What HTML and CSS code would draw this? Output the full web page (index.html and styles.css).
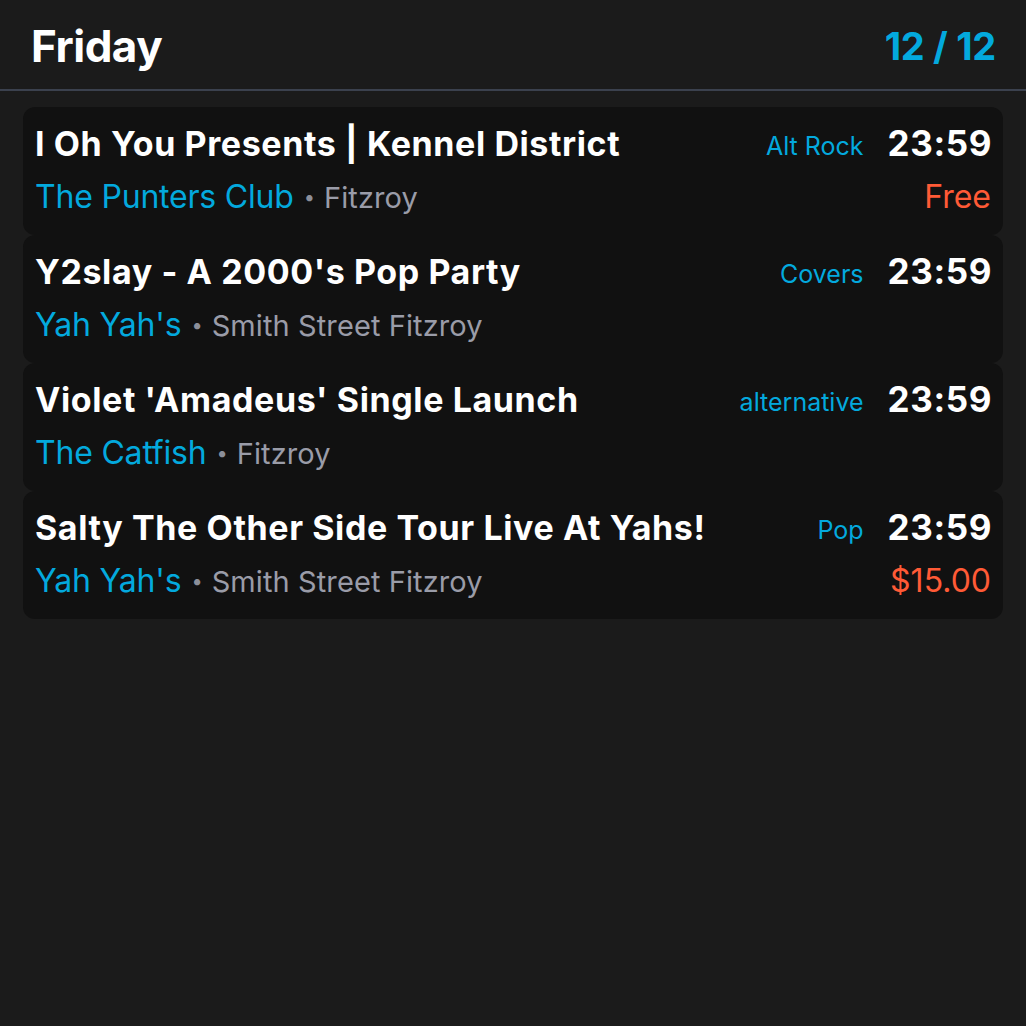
FILE: index.html
```html
<!DOCTYPE html>
<html>
<head>
<meta charset="utf-8">
<link rel="stylesheet" href="styles.css">
</head>
<body>
<div class="app">
  <header class="header">
    <h1 class="day">Friday</h1>
    <div class="count">12 / 12</div>
  </header>
  <main class="list">
    <article class="card">
      <div class="title">I Oh You Presents | Kennel District</div>
      <div class="genre">Alt Rock</div>
      <div class="time">23:59</div>
      <div class="place"><span class="venue">The Punters Club</span><span class="dot">•</span><span class="suburb">Fitzroy</span></div>
      <div class="price">Free</div>
    </article>
    <article class="card">
      <div class="title">Y2slay - A 2000's Pop Party</div>
      <div class="genre">Covers</div>
      <div class="time">23:59</div>
      <div class="place"><span class="venue">Yah Yah's</span><span class="dot">•</span><span class="suburb">Smith Street Fitzroy</span></div>
      <div class="price"></div>
    </article>
    <article class="card">
      <div class="title">Violet 'Amadeus' Single Launch</div>
      <div class="genre">alternative</div>
      <div class="time">23:59</div>
      <div class="place"><span class="venue">The Catfish</span><span class="dot">•</span><span class="suburb">Fitzroy</span></div>
      <div class="price"></div>
    </article>
    <article class="card">
      <div class="title">Salty The Other Side Tour Live At Yahs!</div>
      <div class="genre">Pop</div>
      <div class="time">23:59</div>
      <div class="place"><span class="venue">Yah Yah's</span><span class="dot">•</span><span class="suburb">Smith Street Fitzroy</span></div>
      <div class="price">$15.00</div>
    </article>
  </main>
</div>
</body>
</html>
```
FILE: styles.css
```css
* { box-sizing: border-box; }
html, body {
  margin: 0;
  padding: 0;
  background: #1b1b1b;
  font-family: Inter, "Noto Sans", "Liberation Sans", sans-serif;
  color: #ffffff;
}
.app {
  width: 1026px;
  height: 1026px;
}
.header {
  display: flex;
  justify-content: space-between;
  align-items: center;
  height: 91px;
  padding: 3px 30px 0 31px;
  border-bottom: 2px solid #3b414e;
}
.day {
  margin: 0;
  font-size: 44px;
  font-weight: 700;
  letter-spacing: -0.5px;
}
.count {
  font-size: 38px;
  font-weight: 700;
  color: #03a9de;
  letter-spacing: -0.3px;
}
.list {
  display: flex;
  flex-direction: column;
  gap: 0;
  padding: 16px 23px;
}
.card {
  display: grid;
  grid-template-columns: 1fr auto auto;
  grid-template-rows: 44px 44px;
  row-gap: 9px;
  column-gap: 25px;
  align-items: center;
  height: 128px;
  background: #111111;
  border-radius: 12px;
  padding: 14px 12px 16px 12px;
}
.title {
  font-size: 34px;
  font-weight: 700;
  letter-spacing: 0.6px;
  white-space: nowrap;
}
.genre {
  font-size: 25px;
  color: #03a9de;
  align-self: end;
  padding-bottom: 4px;
  margin-right: -1px;
}
.time {
  font-size: 35px;
  font-weight: 700;
  letter-spacing: 0.6px;
  text-align: right;
  margin-right: -1px;
}
.place {
  grid-column: 1 / 3;
  white-space: nowrap;
}
.venue {
  font-size: 32px;
  color: #03a9de;
  letter-spacing: -0.2px;
}
.dot {
  color: #8c8f9a;
  font-size: 20px;
  margin: 0 9px 0 10px;
  vertical-align: 4px;
}
.suburb {
  font-size: 29px;
  color: #9a9ca8;
  letter-spacing: 0.1px;
}
.price {
  font-size: 32px;
  color: #ff5a36;
  text-align: right;
}
```
